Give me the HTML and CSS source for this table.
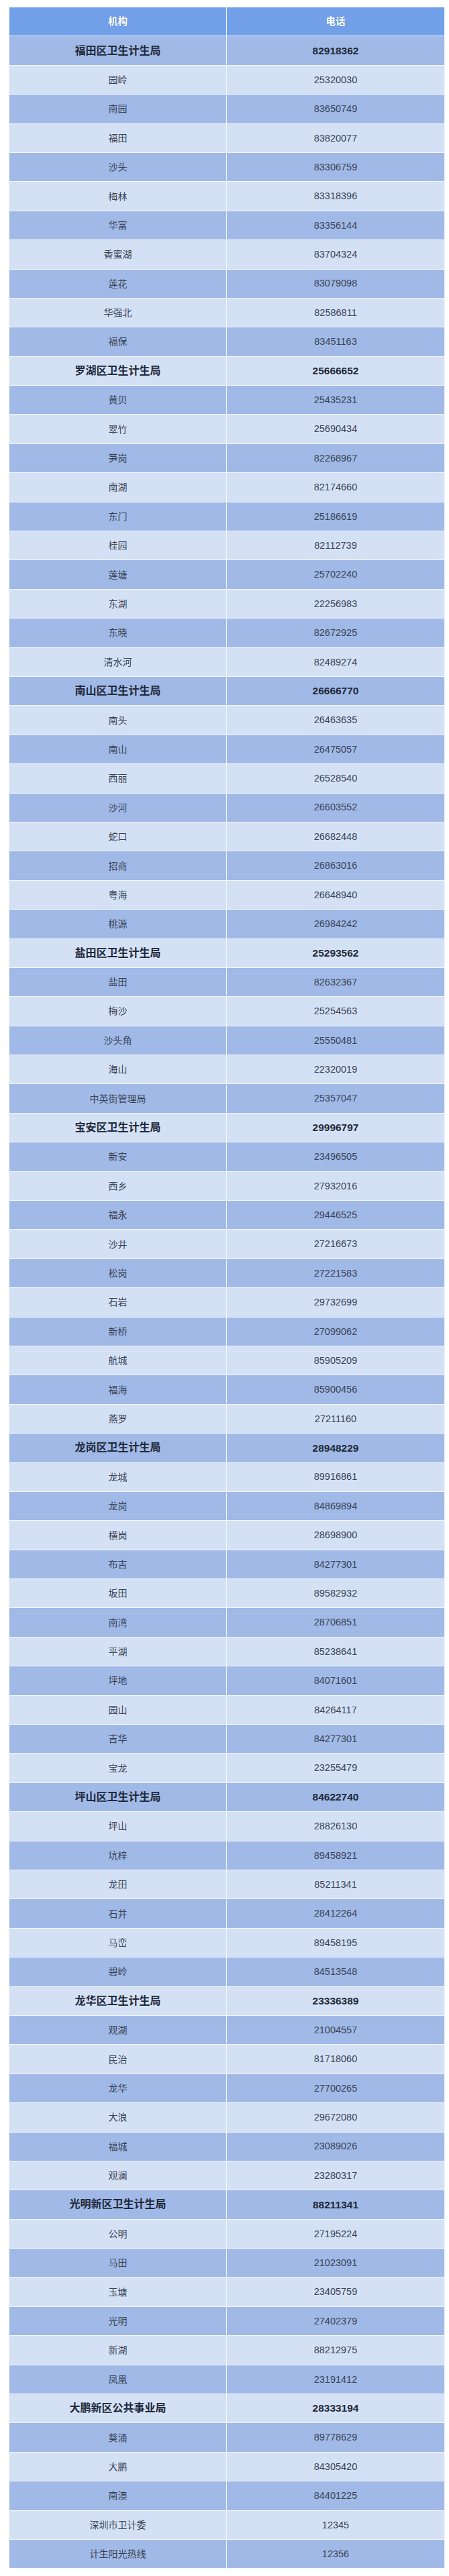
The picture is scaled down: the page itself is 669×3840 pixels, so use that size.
FILE: index.html
```html
<!DOCTYPE html>
<html lang="zh-CN">
<head>
<meta charset="utf-8">
<title>深圳市卫生计生机构电话</title>
<link rel="stylesheet" href="styles.css">
</head>
<body>
<div class="wrap">
<table class="phones">
<thead>
<tr><th class="c1">机构</th><th class="c2">电话</th></tr>
</thead>
<tbody>
<tr class="bureau"><td>福田区卫生计生局</td><td>82918362</td></tr>
<tr><td>园岭</td><td>25320030</td></tr>
<tr><td>南园</td><td>83650749</td></tr>
<tr><td>福田</td><td>83820077</td></tr>
<tr><td>沙头</td><td>83306759</td></tr>
<tr><td>梅林</td><td>83318396</td></tr>
<tr><td>华富</td><td>83356144</td></tr>
<tr><td>香蜜湖</td><td>83704324</td></tr>
<tr><td>莲花</td><td>83079098</td></tr>
<tr><td>华强北</td><td>82586811</td></tr>
<tr><td>福保</td><td>83451163</td></tr>
<tr class="bureau"><td>罗湖区卫生计生局</td><td>25666652</td></tr>
<tr><td>黄贝</td><td>25435231</td></tr>
<tr><td>翠竹</td><td>25690434</td></tr>
<tr><td>笋岗</td><td>82268967</td></tr>
<tr><td>南湖</td><td>82174660</td></tr>
<tr><td>东门</td><td>25186619</td></tr>
<tr><td>桂园</td><td>82112739</td></tr>
<tr><td>莲塘</td><td>25702240</td></tr>
<tr><td>东湖</td><td>22256983</td></tr>
<tr><td>东晓</td><td>82672925</td></tr>
<tr><td>清水河</td><td>82489274</td></tr>
<tr class="bureau"><td>南山区卫生计生局</td><td>26666770</td></tr>
<tr><td>南头</td><td>26463635</td></tr>
<tr><td>南山</td><td>26475057</td></tr>
<tr><td>西丽</td><td>26528540</td></tr>
<tr><td>沙河</td><td>26603552</td></tr>
<tr><td>蛇口</td><td>26682448</td></tr>
<tr><td>招商</td><td>26863016</td></tr>
<tr><td>粤海</td><td>26648940</td></tr>
<tr><td>桃源</td><td>26984242</td></tr>
<tr class="bureau"><td>盐田区卫生计生局</td><td>25293562</td></tr>
<tr><td>盐田</td><td>82632367</td></tr>
<tr><td>梅沙</td><td>25254563</td></tr>
<tr><td>沙头角</td><td>25550481</td></tr>
<tr><td>海山</td><td>22320019</td></tr>
<tr><td>中英街管理局</td><td>25357047</td></tr>
<tr class="bureau"><td>宝安区卫生计生局</td><td>29996797</td></tr>
<tr><td>新安</td><td>23496505</td></tr>
<tr><td>西乡</td><td>27932016</td></tr>
<tr><td>福永</td><td>29446525</td></tr>
<tr><td>沙井</td><td>27216673</td></tr>
<tr><td>松岗</td><td>27221583</td></tr>
<tr><td>石岩</td><td>29732699</td></tr>
<tr><td>新桥</td><td>27099062</td></tr>
<tr><td>航城</td><td>85905209</td></tr>
<tr><td>福海</td><td>85900456</td></tr>
<tr><td>燕罗</td><td>27211160</td></tr>
<tr class="bureau"><td>龙岗区卫生计生局</td><td>28948229</td></tr>
<tr><td>龙城</td><td>89916861</td></tr>
<tr><td>龙岗</td><td>84869894</td></tr>
<tr><td>横岗</td><td>28698900</td></tr>
<tr><td>布吉</td><td>84277301</td></tr>
<tr><td>坂田</td><td>89582932</td></tr>
<tr><td>南湾</td><td>28706851</td></tr>
<tr><td>平湖</td><td>85238641</td></tr>
<tr><td>坪地</td><td>84071601</td></tr>
<tr><td>园山</td><td>84264117</td></tr>
<tr><td>吉华</td><td>84277301</td></tr>
<tr><td>宝龙</td><td>23255479</td></tr>
<tr class="bureau"><td>坪山区卫生计生局</td><td>84622740</td></tr>
<tr><td>坪山</td><td>28826130</td></tr>
<tr><td>坑梓</td><td>89458921</td></tr>
<tr><td>龙田</td><td>85211341</td></tr>
<tr><td>石井</td><td>28412264</td></tr>
<tr><td>马峦</td><td>89458195</td></tr>
<tr><td>碧岭</td><td>84513548</td></tr>
<tr class="bureau"><td>龙华区卫生计生局</td><td>23336389</td></tr>
<tr><td>观湖</td><td>21004557</td></tr>
<tr><td>民治</td><td>81718060</td></tr>
<tr><td>龙华</td><td>27700265</td></tr>
<tr><td>大浪</td><td>29672080</td></tr>
<tr><td>福城</td><td>23089026</td></tr>
<tr><td>观澜</td><td>23280317</td></tr>
<tr class="bureau"><td>光明新区卫生计生局</td><td>88211341</td></tr>
<tr><td>公明</td><td>27195224</td></tr>
<tr><td>马田</td><td>21023091</td></tr>
<tr><td>玉塘</td><td>23405759</td></tr>
<tr><td>光明</td><td>27402379</td></tr>
<tr><td>新湖</td><td>88212975</td></tr>
<tr><td>凤凰</td><td>23191412</td></tr>
<tr class="bureau"><td>大鹏新区公共事业局</td><td>28333194</td></tr>
<tr><td>葵涌</td><td>89778629</td></tr>
<tr><td>大鹏</td><td>84305420</td></tr>
<tr><td>南澳</td><td>84401225</td></tr>
<tr><td>深圳市卫计委</td><td>12345</td></tr>
<tr><td>计生阳光热线</td><td>12356</td></tr>
</tbody>
</table>
</div>
</body>
</html>
```

FILE: styles.css
```css
html, body {
  margin: 0;
  padding: 0;
  background: #ffffff;
}

.wrap {
  padding: 10px 6px 11px 13px;
}

.phones {
  border-collapse: separate;
  border-spacing: 1px;
  table-layout: fixed;
  width: 650px;
  background: #f2f7fd;
  font-family: "Liberation Sans", "Noto Sans CJK SC", sans-serif;
}

.phones th,
.phones td {
  height: 42.4px;
  padding: 0;
  text-align: center;
  vertical-align: middle;
  line-height: 1;
}

.phones th.c1 {
  width: 323px;
}

.phones th.c2 {
  width: 324px;
}

.phones th {
  background: #72a0e8;
  color: #ffffff;
  font-size: 14.5px;
  font-weight: bold;
  text-shadow: 0 0 1px rgba(60, 90, 150, 0.6);
}

.phones td {
  font-size: 14px;
  color: #3a4356;
}

.phones td:nth-child(2) {
  font-size: 14.5px;
}

.phones tbody tr:nth-child(odd) td {
  background: #a0b9e6;
}

.phones tbody tr:nth-child(even) td {
  background: #d4e1f5;
}

.phones tr.bureau td {
  font-size: 16px;
  font-weight: bold;
  color: #1f2939;
}

.phones tr.bureau td:nth-child(2) {
  font-size: 15.5px;
}
```
